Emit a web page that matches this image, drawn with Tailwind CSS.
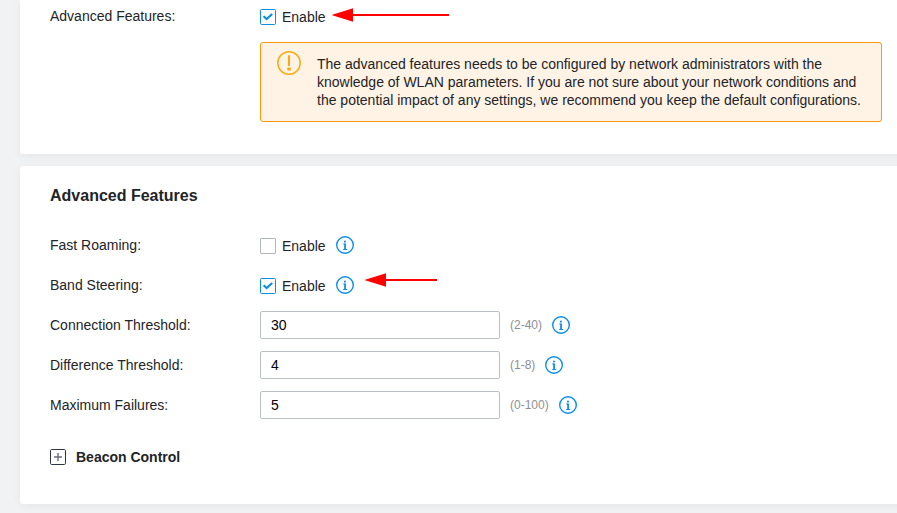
<!DOCTYPE html>
<html lang="en">
<head>
<meta charset="utf-8">
<title>WLAN Advanced Features</title>
<script src="https://cdn.jsdelivr.net/npm/@tailwindcss/browser@4"></script>
</head>
<body class="w-[897px] h-[513px] overflow-hidden bg-[#f1f2f4] font-['Liberation_Sans',Arial,sans-serif] text-[14px] leading-[18px] text-[#222427]">
<svg class="hidden">
  <symbol id="info" viewBox="0 0 18 18">
    <circle cx="9" cy="9" r="8.3" fill="none" stroke="#0a8ee8" stroke-width="1.4"/>
    <rect x="8" y="4.7" width="1.9" height="1.7" fill="#0a8ee8"/>
    <path d="M7.2 8h1.9v5.5M7.2 13.5h4" fill="none" stroke="#0a8ee8" stroke-width="1"/>
    <path d="M9.1 7.6V14" stroke="#0a8ee8" stroke-width="1.6"/>
  </symbol>
  <symbol id="checked" viewBox="0 0 16 16">
    <rect x=".5" y=".5" width="15" height="15" rx="1" fill="#fff" stroke="#0a8ee8"/>
    <path d="M3.6 7.3 6.6 10.1 12.2 4.9" fill="none" stroke="#0a8ee8" stroke-width="2.1"/>
  </symbol>
</svg>
<main class="ml-5 w-[920px] flex flex-col gap-3">
  <section class="h-[154px] bg-white rounded-b-[3px] shadow-[0_2px_10px_rgba(0,0,0,0.05)] pl-[30px]">
    <div class="flex h-[42px] pt-[7px]">
      <div class="w-[210px]">Advanced Features:</div>
      <div class="flex pt-[1px]">
        <svg class="w-4 h-4 mt-[1px] mr-[6px]"><use href="#checked"/></svg>
        <span>Enable</span>
        <svg class="w-[118px] h-[14px] ml-[5px]" viewBox="0 0 118 14"><path d="M.5 7 22 .2V6h96v2H22v5.8z" fill="#f00"/></svg>
      </div>
    </div>
    <div class="ml-[210px] w-[622px] h-[80px] flex border border-[#ff980a] rounded-[3px] bg-[#fff3e6] pl-4 pt-2">
      <svg class="w-6 h-6 mr-4 shrink-0" viewBox="0 0 24 24"><circle cx="12" cy="12" r="11.2" fill="none" stroke="#fcab0c" stroke-width="1.5"/><path d="M11 4.3h2V15h-2z" fill="#fcab0c"/><ellipse cx="12" cy="18" rx="2" ry="1.7" fill="#fcab0c"/></svg>
      <p class="pt-[4px] whitespace-nowrap">The advanced features needs to be configured by network administrators with the<br>knowledge of WLAN parameters. If you are not sure about your network conditions and<br>the potential impact of any settings, we recommend you keep the default configurations.</p>
    </div>
  </section>
  <section class="h-[338px] bg-white rounded-[3px] shadow-[0_2px_10px_rgba(0,0,0,0.05)] pl-[30px] pt-5">
    <h2 class="text-[16px] leading-[19px] font-bold mb-5">Advanced Features</h2>
    <div class="flex items-center h-10 pb-[1px]">
      <div class="w-[210px]">Fast Roaming:</div>
      <span class="w-4 h-4 border border-[#b2b5b9] rounded-[1px] mr-[6px] mt-[3px]"></span>
      <span class="pt-[2px]">Enable</span>
      <svg class="w-[18px] h-[18px] ml-[10px] mt-[1px]"><use href="#info"/></svg>
    </div>
    <div class="flex items-center h-10 pb-[1px]">
      <div class="w-[210px]">Band Steering:</div>
      <svg class="w-4 h-4 mr-[6px] mt-[3px]"><use href="#checked"/></svg>
      <span class="pt-[2px]">Enable</span>
      <svg class="w-[18px] h-[18px] ml-[10px] mt-[1px]"><use href="#info"/></svg>
      <svg class="w-[74px] h-[14px] ml-[10px] mb-[9px]" viewBox="0 0 74 14"><path d="M.3 7 22 .2V6h51v2H22v5.8z" fill="#f00"/></svg>
    </div>
    <div class="flex items-center h-10">
      <label for="conn" class="w-[210px]">Connection Threshold:</label>
      <input id="conn" value="30" class="w-[240px] h-7 border border-[#b9bfc2] rounded-[2px] px-[10px] text-black">
      <span class="ml-[10px] mr-[10px] text-[12px] text-[#8c9095]">(2-40)</span>
      <svg class="w-[18px] h-[18px]"><use href="#info"/></svg>
    </div>
    <div class="flex items-center h-10">
      <label for="diff" class="w-[210px]">Difference Threshold:</label>
      <input id="diff" value="4" class="w-[240px] h-7 border border-[#b9bfc2] rounded-[2px] px-[10px] text-black">
      <span class="ml-[10px] mr-[10px] text-[12px] text-[#8c9095]">(1-8)</span>
      <svg class="w-[18px] h-[18px]"><use href="#info"/></svg>
    </div>
    <div class="flex items-center h-10">
      <label for="fail" class="w-[210px]">Maximum Failures:</label>
      <input id="fail" value="5" class="w-[240px] h-7 border border-[#b9bfc2] rounded-[2px] px-[10px] text-black">
      <span class="ml-[10px] mr-[10px] text-[12px] text-[#8c9095]">(0-100)</span>
      <svg class="w-[18px] h-[18px]"><use href="#info"/></svg>
    </div>
    <div class="flex items-center mt-[23px] font-bold">
      <svg class="w-4 h-4 mr-[10px]" viewBox="0 0 16 16" fill="none"><rect x=".5" y=".5" width="15" height="15" rx="1.2" stroke="#30364a"/><path d="M4 8h8M8 4v8" stroke="#686d7a" stroke-width="1.4"/></svg>
      <span>Beacon Control</span>
    </div>
  </section>
</main>
</body>
</html>
